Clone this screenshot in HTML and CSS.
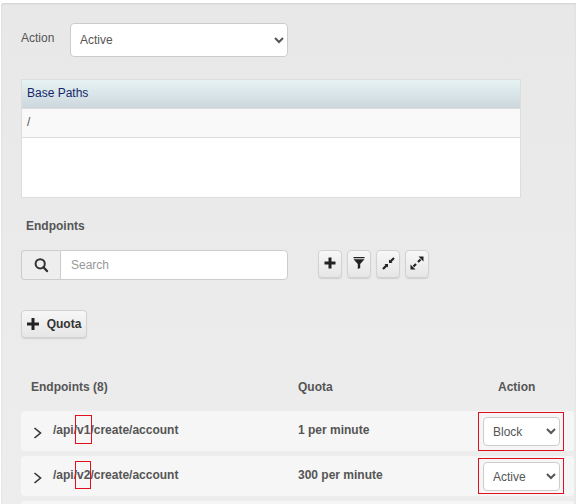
FILE: index.html
```html
<!DOCTYPE html>
<html lang="en">
<head>
<meta charset="utf-8">
<title>Endpoints</title>
<link rel="stylesheet" href="styles.css">
</head>
<body>
<main class="panel">
  <div class="action-row">
    <label class="action-label">Action</label>
    <select class="select select-main"><option>Active</option><option>Block</option></select>
  </div>
  <div class="paths">
    <div class="paths-head">Base Paths</div>
    <div class="paths-row">/</div>
    <div class="paths-empty"></div>
  </div>
  <h2 class="section-title">Endpoints</h2>
  <div class="tools">
    <div class="search">
      <span class="search-addon">
        <svg width="16" height="16" viewBox="0 0 16 16"><circle cx="7.200" cy="6.800" r="4.600" fill="none" stroke="#333" stroke-width="2"/><path d="M10.500 10.200 14 14" stroke="#333" stroke-width="2.400" stroke-linecap="round"/></svg>
      </span>
      <input class="search-input" placeholder="Search">
    </div>
    <div class="icon-buttons">
      <button class="btn icon-btn"><svg width="12" height="12" viewBox="0 0 12 12"><path d="M4.500.5h3v4H11.500v3H7.500v4h-3v-4H.5v-3h4z" fill="#222"/></svg></button>
      <button class="btn icon-btn"><svg width="12" height="12" viewBox="0 0 12 12"><path d="M.5 0h11v1.300H.5zM.5 2.300h11L7.200 7v4l-2.400 1V7z" fill="#222"/></svg></button>
      <button class="btn icon-btn"><svg width="13" height="13" viewBox="0 0 13 13"><path d="M7 2.500V6H10.500zM6 10.500V7H2.500z" fill="#222"/><path d="M8.500 4.500 12 1M4.500 8.500 1 12" stroke="#222" stroke-width="2.200"/></svg></button>
      <button class="btn icon-btn"><svg width="14" height="14" viewBox="0 0 14 14"><path d="M8.500.5H13.500V5.500zM5.500 13.500H.5V8.500z" fill="#222"/><path d="M10.500 3.500 8 6M3.500 10.500 6 8" stroke="#222" stroke-width="2.200"/></svg></button>
    </div>
  </div>
  <button class="btn quota-btn"><svg width="12" height="12" viewBox="0 0 12 12"><path d="M4.500 0h3v4.500H12v3H7.500V12h-3V7.500H0v-3h4.500z" fill="#222"/></svg><span>Quota</span></button>
  <div class="table-head">
    <span>Endpoints (8)</span>
    <span>Quota</span>
    <span>Action</span>
  </div>
  <div class="ep-row">
    <svg class="chev" width="10" height="12" viewBox="0 0 10 12"><path d="M1.500 1 7.500 6 1.500 11" fill="none" stroke="#333" stroke-width="1.600"/></svg>
    <span class="ep-path">/api/<span class="mark mark-v1">v1</span>/create/account</span>
    <span class="ep-quota">1 per minute</span>
    <span class="ep-action"><select class="select select-row"><option>Block</option><option>Active</option></select><i class="outline outline-first"></i></span>
  </div>
  <div class="ep-row">
    <svg class="chev" width="10" height="12" viewBox="0 0 10 12"><path d="M1.500 1 7.500 6 1.500 11" fill="none" stroke="#333" stroke-width="1.600"/></svg>
    <span class="ep-path">/api/<span class="mark mark-v2">v2</span>/create/account</span>
    <span class="ep-quota">300 per minute</span>
    <span class="ep-action"><select class="select select-row"><option>Active</option><option>Block</option></select><i class="outline outline-second"></i></span>
  </div>
  <div class="ep-row"></div>
</main>
</body>
</html>
```
FILE: styles.css
```css
* { box-sizing: border-box; }
html, body { margin: 0; height: 504px; overflow: hidden; background: #fff; }
body { font-family: "Liberation Sans", Arial, sans-serif; font-size: 12px; color: #555; }
.panel {
  margin: 3px 0 0 1px;
  padding: 20px 0 0 20px;
  height: 501px;
  width: 575px;
  background: linear-gradient(#e8e8e8, #ededed);
  border-radius: 3px 0 0 0;
  box-shadow: inset 0 1px 2px rgba(0,0,0,.1);
  overflow: hidden;
}
.action-row { display: flex; align-items: flex-start; height: 34px; }
.action-label { width: 49px; padding-top: 8px; }
.select {
  background-color: #fff;
  border: 1px solid #ccc;
  border-radius: 4px;
  color: #555;
  font: 12px "Liberation Sans", Arial, sans-serif;
  padding: 0 5px;
}
.select-main { width: 218px; height: 34px; }
.paths { width: 500px; margin-top: 22px; border: 1px solid #ddd; background: #fff; }
.paths-head {
  height: 29px;
  padding: 6px 5px 0;
  color: #14266b;
  background: linear-gradient(#e6f3f2, #ccd7de);
  border-bottom: 1px solid #dcdcdc;
  line-height: 15px;
}
.paths-row { height: 29px; padding: 6px 5px 0; background: #f9f9f9; border-bottom: 1px solid #ddd; line-height: 15px; }
.paths-empty { height: 59px; }
.section-title { margin: 21px 0 0 5px; font-size: 12px; line-height: 14px; font-weight: bold; color: #555; }
.tools { display: flex; margin-top: 17px; }
.search { display: flex; width: 267px; height: 30px; }
.search-addon {
  width: 39px;
  display: flex; align-items: center; justify-content: center;
  background: #eee;
  border: 1px solid #ccc;
  border-right: 0;
  border-radius: 4px 0 0 4px;
}
.search-input {
  flex: 1; min-width: 0;
  border: 1px solid #ccc;
  border-radius: 0 4px 4px 0;
  padding: 0 10px;
  font: 12px "Liberation Sans", Arial, sans-serif;
  background: #fff;
}
.search-input::placeholder { color: #999; opacity: 1; }
.icon-buttons { display: flex; gap: 5px; margin-left: 30px; }
.btn {
  display: flex; align-items: center; justify-content: center;
  padding: 0;
  border: 1px solid #d2d2d2;
  border-radius: 4px;
  background: linear-gradient(#f7f7f7, #e6e6e6);
  box-shadow: 0 1px 1px rgba(0,0,0,.12);
}
.icon-btn { width: 24px; height: 28px; }
.icon-btn svg { margin-bottom: 2px; }
.quota-btn {
  width: 66px; height: 28px; margin-top: 30px; gap: 8px;
  font: bold 12px "Liberation Sans", Arial, sans-serif;
  color: #333;
}
.table-head {
  display: grid;
  grid-template-columns: 267px 200px 1fr;
  margin: 42px 0 0 10px;
  height: 14px;
  line-height: 14px;
  font-weight: bold;
}
.ep-row {
  display: grid;
  grid-template-columns: 12px 253px 185px 1fr;
  align-items: center;
  height: 40px;
  width: 553px;
  margin-top: 5px;
  padding-left: 12px;
  background: #f6f6f6;
  border-radius: 4px;
}
.table-head + .ep-row { margin-top: 17px; }
.chev { margin-top: 4px; }
.ep-path { margin: 0 0 2px 8px; font-weight: bold; }
.ep-quota { margin-bottom: 2px; font-weight: bold; }
.mark { position: relative; }
.mark::after {
  content: "";
  position: absolute;
  left: -2px;
  right: -2px;
  border: 1px solid #e0101c;
}
.mark-v1::after { top: -8px; height: 27px; }
.mark-v2::after { top: -7px; height: 26px; left: -2px; right: -1px; }
.ep-action { position: relative; display: block; padding-top: 1px; }
.select-row { display: block; width: 77px; height: 29px; }
.outline {
  position: absolute;
  left: -5px;
  width: 86px;
  border: 1px solid #e0101c;
}
.outline-first { top: -4px; height: 39px; }
.outline-second { top: -3px; height: 36px; }
```
